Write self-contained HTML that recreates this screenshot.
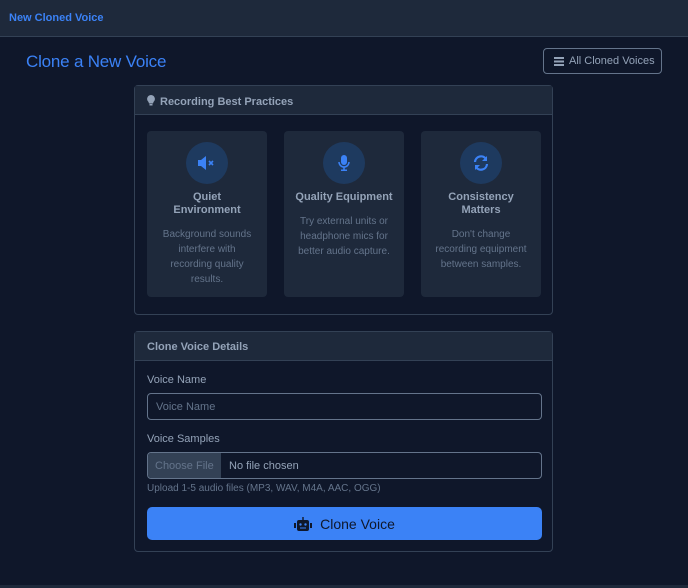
<!DOCTYPE html>
<html><head><style>
*{box-sizing:border-box;margin:0;padding:0}
body{width:688px;height:588px;background:#0f172a;font-family:"Liberation Sans",sans-serif;color:#94a3b8;position:relative;overflow:hidden}
.nav{position:absolute;left:0;top:0;width:688px;height:37px;background:#1e293b;border-bottom:1px solid #334155}
.nav span{position:absolute;left:9px;top:12px;font-size:11px;font-weight:bold;color:#3b82f6}
h1{position:absolute;left:26px;top:52px;font-size:17px;font-weight:normal;color:#3b82f6;letter-spacing:-0.2px}
.allbtn{position:absolute;left:543px;top:48px;width:119px;height:26px;border:1px solid #64748b;border-radius:4px;font-size:11px;color:#94a3b8;padding:6px 0 0 25px;white-space:nowrap}
.allbtn i{position:absolute;left:10px;top:8px;width:10px;height:9px;background:repeating-linear-gradient(#94a3b8 0 2px,transparent 2px 3.5px)}
.card{position:absolute;left:134px;width:419px;border:1px solid #334155;border-radius:4px}
.hd{height:29px;background:#1e293b;border-bottom:1px solid #334155;font-size:11px;font-weight:bold;color:#94a3b8;padding:9px 0 0 12px}
.tip{position:absolute;top:45px;width:120px;height:166px;background:#1e293b;border-radius:4px;text-align:center}
.circ{width:42px;height:42px;border-radius:50%;background:#1e3a5f;margin:11px auto 0;display:flex;align-items:center;justify-content:center}
.tip b{display:block;font-size:11px;color:#94a3b8;margin-top:7px;line-height:13px}
.tip p{font-size:10px;color:#64748b;line-height:15px;margin-top:10px;padding:0 10px}
label{position:absolute;left:12px;font-size:11px;color:#94a3b8}
.inp{position:absolute;left:12px;width:395px;height:27px;border:1px solid #64748b;border-radius:4px;font-size:11px;color:#64748b}
</style></head><body>
<div class="nav"><span>New Cloned Voice</span></div>
<h1>Clone a New Voice</h1>
<div class="allbtn"><i></i>All Cloned Voices</div>
<div class="card" style="top:85px;height:230px">
<div class="hd"><svg width="8" height="11" viewBox="0 0 8 11" style="vertical-align:-1px;margin-right:5px"><path d="M4 0A4 4 0 0 0 1.5 7L2 8.5H6L6.5 7A4 4 0 0 0 4 0ZM2.5 9H5.5V10.5H2.5Z" fill="#94a3b8"/></svg>Recording Best Practices</div>
<div class="tip" style="left:12px"><div class="circ"><svg width="18" height="14" viewBox="0 0 18 14"><path d="M0 4H3L8 0V14L3 10H0Z" fill="#3b82f6"/><path d="M11 5L15 9M15 5L11 9" stroke="#3b82f6" stroke-width="1.6"/></svg></div><b>Quiet<br>Environment</b><p>Background sounds interfere with recording quality results.</p></div>
<div class="tip" style="left:149px"><div class="circ"><svg width="12" height="16" viewBox="0 0 12 16"><rect x="3" y="0" width="6" height="10" rx="3" fill="#3b82f6"/><path d="M1 7A5 5 0 0 0 11 7M6 12V15M3 15.3H9" stroke="#3b82f6" stroke-width="1.5" fill="none"/></svg></div><b>Quality Equipment</b><p>Try external units or headphone mics for better audio capture.</p></div>
<div class="tip" style="left:286px"><div class="circ"><svg width="16" height="16" viewBox="0 0 16 16"><path d="M2 7A6 6 0 0 1 13 4M14 9A6 6 0 0 1 3 12" stroke="#3b82f6" stroke-width="2.2" fill="none"/><path d="M14 1V6H9Z M2 15V10H7Z" fill="#3b82f6"/></svg></div><b>Consistency<br>Matters</b><p>Don't change recording equipment between samples.</p></div>
</div>
<div class="card" style="top:331px;height:221px">
<div class="hd">Clone Voice Details</div>
<label style="top:42px">Voice Name</label>
<div class="inp" style="top:61px;padding:7px 8px">Voice Name</div>
<label style="top:101px">Voice Samples</label>
<div class="inp" style="top:120px;overflow:hidden;white-space:nowrap"><span style="position:absolute;left:0;top:0;width:73px;height:25px;background:#334155;padding:7px 7px;color:#64748b">Choose File</span><span style="position:absolute;left:81px;top:7px;color:#94a3b8">No file chosen</span></div>
<label style="top:151px;font-size:10px;color:#64748b">Upload 1-5 audio files (MP3, WAV, M4A, AAC, OGG)</label>
<div style="position:absolute;left:12px;top:175px;width:395px;height:33px;background:#3b82f6;border-radius:5px;text-align:center;font-size:14px;color:#0f172a;padding-top:9px"><svg width="18" height="14" viewBox="0 0 18 14" style="vertical-align:-2px;margin-right:8px"><rect x="3" y="3" width="12" height="11" rx="2" fill="#0f172a"/><rect x="0" y="6" width="2" height="5" fill="#0f172a"/><rect x="16" y="6" width="2" height="5" fill="#0f172a"/><rect x="8.3" y="0" width="1.4" height="3" fill="#0f172a"/><circle cx="6.5" cy="7.5" r="1.2" fill="#3b82f6"/><circle cx="11.5" cy="7.5" r="1.2" fill="#3b82f6"/><rect x="6" y="10.5" width="6" height="1" fill="#3b82f6"/></svg>Clone Voice</div>
</div>
<div style="position:absolute;left:0;top:585px;width:688px;height:3px;background:#1e293b"></div>
</body></html>
